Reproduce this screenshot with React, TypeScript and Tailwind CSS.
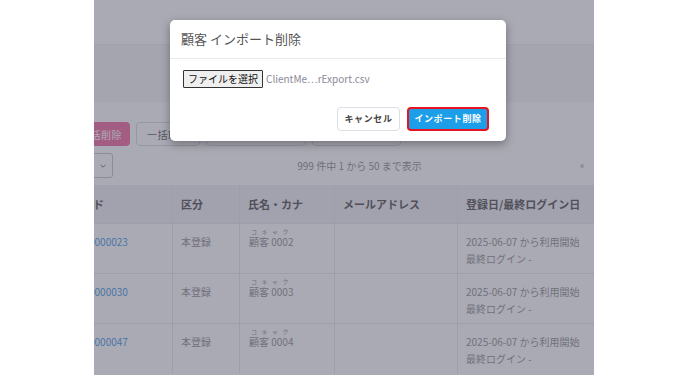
import React from "react";

const font = { fontFamily: '"Noto Sans CJK JP", "Noto Sans", sans-serif' };

const rows = [
  { id: "0000023", num: "0002" },
  { id: "0000030", num: "0003" },
  { id: "0000047", num: "0004" },
];

export default function App() {
  return (
    <div className="w-[688px] h-[375px] bg-white flex justify-center" style={font}>
      <div className="relative w-[500px] h-[375px] overflow-hidden bg-white">
        {/* underlying page */}
        <div className="flex flex-col w-[500px]">
          <div className="h-[44px] bg-white" />
          <div className="h-[58px] bg-[#f4f4f7] border-t border-[#ececf0]" />
          <div className="bg-white flex flex-col">
            <div className="flex items-center gap-[6px] mt-[20px] h-[24px]">
              <div className="ml-[-22px] h-[24px] px-[8px] rounded-[4px] bg-[#f0649a] text-white text-[10px] tracking-[0.5px] flex items-center">一括削除</div>
              <div className="h-[24px] px-[10px] rounded-[4px] border border-[#d8d8de] text-[#555] text-[10px] tracking-[0.5px] flex items-center">一括取消</div>
              <div className="h-[24px] px-[10px] rounded-[4px] border border-[#d8d8de] text-[#555] text-[10px] flex items-center">CSVエクスポート</div>
              <div className="h-[24px] px-[10px] rounded-[4px] border border-[#d8d8de] text-[#555] text-[10px] flex items-center">CSVインポート</div>
            </div>
            <div className="flex items-center mt-[7px] h-[25px]">
              <div className="ml-[-40px] w-[59px] h-[25px] rounded-[3px] border border-[#c0c0c8] flex items-center justify-end pr-[5px]">
                <svg width="8" height="8" viewBox="0 0 10 10" fill="none" stroke="#666" strokeWidth="1.2"><path d="M2 3.5 L5 6.5 L8 3.5" /></svg>
              </div>
              <div className="flex-1 text-center text-[10px] text-[#8a8a8a] ml-[42px]">999 件中 1 から 50 まで表示</div>
              <div className="w-[30px] text-[9px] text-[#888] pl-[16px]">«</div>
            </div>
            <div className="mt-[7px] flex flex-col text-[10px]">
              <div className="flex h-[38px] bg-[#efeff3] font-bold text-[11px] text-[#4a4a4a] items-center">
                <div className="w-[79px] h-full flex items-center border-r border-[#e6e6ea]"><span className="ml-[-23px]">コード</span></div>
                <div className="w-[67px] h-full flex items-center pl-[8px] border-r border-[#e6e6ea]">区分</div>
                <div className="w-[95px] h-full flex items-center pl-[8px] border-r border-[#e6e6ea]">氏名・カナ</div>
                <div className="w-[123px] h-full flex items-center pl-[8px] border-r border-[#e6e6ea]">メールアドレス</div>
                <div className="flex-1 h-full flex items-center pl-[8px]">登録日/最終ログイン日</div>
              </div>
              {rows.map((r) => (
                <div key={r.id} className="flex h-[50px] border-t border-[#e6e6ea] text-[#8c8c8c]">
                  <div className="w-[79px] h-full border-r border-[#e6e6ea] pt-[9px] leading-[17px]"><span className="ml-[-5px] text-[#3a94e0]">{r.id}</span></div>
                  <div className="w-[67px] h-full border-r border-[#e6e6ea] pl-[8px] pt-[9px] leading-[17px]">本登録</div>
                  <div className="w-[95px] h-full border-r border-[#e6e6ea] pl-[9px] pt-[4px] flex flex-col">
                    <span className="text-[6px] leading-[7px] tracking-[4.5px] pl-[2px]">コキャク</span>
                    <span className="leading-[13px]">顧客 {r.num}</span>
                  </div>
                  <div className="w-[123px] h-full border-r border-[#e6e6ea]" />
                  <div className="flex-1 h-full pl-[8px] pt-[9px] leading-[17px] flex flex-col">
                    <span>2025-06-07 から利用開始</span>
                    <span>最終ログイン -</span>
                  </div>
                </div>
              ))}
            </div>
          </div>
        </div>
        {/* overlay */}
        <div className="absolute inset-0 bg-[rgba(85,85,105,0.5)]" />
        {/* modal */}
        <div className="absolute left-[76px] top-[20px] w-[336px] h-[121px] bg-white rounded-[5px] shadow-[0_3px_10px_rgba(0,0,0,0.35)] flex flex-col">
          <div className="h-[39px] border-b border-[#e9e9ee] flex items-center pl-[11px] text-[13px] text-[#555]">顧客 インポート削除</div>
          <div className="flex items-center pl-[13px] pt-[10px] h-[29px]">
            <div className="h-[18px] px-[4px] border border-[#333] bg-[#efefef] text-[10px] text-[#111] flex items-center rounded-[1px]">ファイルを選択</div>
            <span className="ml-[3px] text-[10px] text-[#8a8a98]">ClientMe…rExport.csv</span>
          </div>
          <div className="flex justify-end items-center gap-[7px] pr-[17px] mt-[19px]">
            <div className="w-[63px] h-[24px] border border-[#dedee6] rounded-[4px] text-[9px] tracking-[0.6px] font-bold text-[#444] flex items-center justify-center">キャンセル</div>
            <div className="w-[82px] h-[24px] border-2 border-[#e8141f] rounded-[4px] bg-[#1c9ee8] text-[9px] tracking-[0.6px] font-bold text-white flex items-center justify-center">インポート削除</div>
          </div>
        </div>
      </div>
    </div>
  );
}
